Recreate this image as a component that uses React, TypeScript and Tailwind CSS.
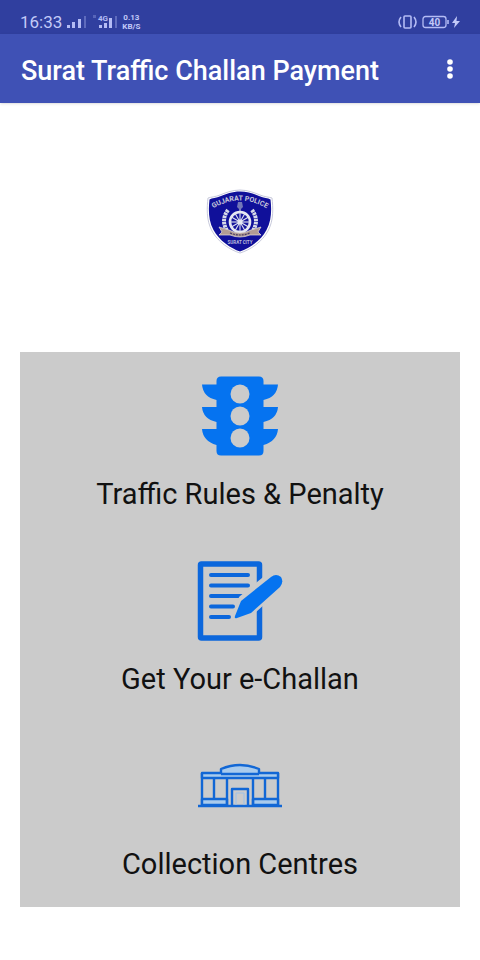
import type { ReactNode } from "react";

const BLUE = "#0573f0";

function Signal() {
  return (
    <svg viewBox="0 0 20 14" className="h-[14px] w-5" fill="#b4bcf5" aria-hidden="true">
      <rect x="0" y="10" width="3" height="3" />
      <rect x="5" y="7" width="3" height="6" />
      <rect x="11" y="4" width="3" height="9" />
      <rect x="17" y="1" width="2" height="12" opacity=".35" />
    </svg>
  );
}

function StatusBar() {
  return (
    <div className="flex h-[34px] items-center justify-between bg-[#303f9f] pt-[10px] pr-[19px] pl-5 text-[#c3caf8]">
      <div className="flex items-center">
        <span className="text-[17px] leading-5">16:33</span>
        <span className="ml-[5px]">
          <Signal />
        </span>
        <svg viewBox="0 0 26 14" className="ml-[6px] h-[14px] w-[26px]" fill="#b4bcf5" aria-hidden="true">
          <rect x="0" y="0" width="3" height="3" opacity=".3" />
          <text x="5" y="6" fontSize="8" fontWeight="700">4G</text>
          <rect x="6" y="10" width="3" height="3" />
          <rect x="11" y="8" width="3" height="5" />
          <rect x="16" y="3" width="3" height="10" />
          <rect x="22" y="1" width="2" height="12" opacity=".35" />
        </svg>
        <span className="ml-[3px] flex flex-col text-center text-[8px] leading-[9px] font-bold">
          <span>0.13</span>
          <span>KB/S</span>
        </span>
      </div>
      <svg viewBox="0 0 64 16" className="h-4 w-16" fill="none" stroke="#b4bcf5" strokeWidth="1.6" aria-hidden="true">
        <rect x="7" y="2" width="7" height="12" rx="1" />
        <path d="M4 3Q0 8 4 13M17 3Q21 8 17 13" />
        <rect x="26" y="2.500" width="23" height="11" rx="2.500" strokeWidth="1.3" />
        <path d="M51 6V10" />
        <text x="37.500" y="11.500" fontSize="10" fontWeight="700" fill="#c3caf8" stroke="none" textAnchor="middle">40</text>
        <path d="M60 2L55 9H58L57 14L63 7H59.500Z" fill="#c3caf8" stroke="none" />
      </svg>
    </div>
  );
}

function PoliceBadge() {
  const spokes = Array.from({ length: 12 }, (_, i) => i * 30);
  return (
    <svg viewBox="0 0 68 66" className="h-[66px] w-[68px]" role="img" aria-label="Gujarat Police, Surat City">
      <path
        d="M34 1C42 1 49 4 54 6C59 8 63 8 66 9C67 18 68 31 62 42C56 53 44 61 34 64C24 61 12 53 6 42C0 31 1 18 2 9C5 8 9 8 14 6C19 4 26 1 34 1Z"
        fill="#fff"
        stroke="#b9bbd2"
        strokeWidth=".8"
      />
      <path
        d="M34 2.500C42 2.500 48 5 53 7C58 9 62 9 64.500 10.500C65.500 19 66 31 60.500 41C55 51.500 43 59.500 34 62.500C25 59.500 13 51.500 7.500 41C2 31 2.500 19 3.500 10.500C6 9 10 9 15 7C20 5 26 2.500 34 2.500Z"
        fill="#10109a"
      />
      <path id="badge-arc" d="M8 19Q34 4 60 19" fill="none" />
      <text fontSize="7" fontWeight="700" fill="#c9c9da">
        <textPath href="#badge-arc" startOffset="50%" textAnchor="middle">GUJARAT POLICE</textPath>
      </text>
      <path d="M32 13H36L37 18L35 20V22H33V20L31 18Z" fill="#7377b8" />
      <path d="M22 21Q14 32 22 43M46 21Q54 32 46 43" fill="none" stroke="#d7dae8" strokeWidth="4" strokeDasharray="2.500 .7" />
      <circle cx="34" cy="33" r="10" fill="#17179c" stroke="#e7e9f2" strokeWidth="2.600" />
      {spokes.map((angle) => (
        <path key={angle} d="M34 23V31" transform={`rotate(${angle} 34 33)`} stroke="#e1e3f0" strokeWidth="1.100" />
      ))}
      <circle cx="34" cy="33" r="2.500" fill="#e7e9f2" />
      <path d="M13 38L23 41Q34 47 45 41L55 38L52 43L55 46L44 46Q34 50 24 46L13 46L16 43Z" fill="#b19c94" stroke="#e5dedb" strokeWidth=".7" />
      <path d="M24 44Q34 48 44 44" fill="none" stroke="#4c3f67" strokeWidth="1.200" strokeDasharray="2 1" />
      <text x="34" y="55" fontSize="4.500" fontWeight="700" fill="#b9bbdb" textAnchor="middle">SURAT CITY</text>
    </svg>
  );
}

function TrafficLightIcon() {
  return (
    <svg viewBox="0 0 88 80" className="h-20 w-[88px]" fill={BLUE} aria-hidden="true">
      <path d="M25 .5H63Q67.500 .5 67.500 5V8.500H82Q81 21 67.500 24V31H82Q81 43 67.500 46V53H82Q81 65 67.500 69V75Q67.500 79.500 63 79.500H25Q20.500 79.500 20.500 75V69Q7 65 6 53H20.500V46Q7 43 6 31H20.500V24Q7 21 6 8.500H20.500V5Q20.500 .5 25 .5Z" />
      <g fill="#cbcbcb">
        <circle cx="44" cy="18" r="9.500" />
        <circle cx="44" cy="40" r="9.500" />
        <circle cx="44" cy="62" r="9.500" />
      </g>
    </svg>
  );
}

function ChallanIcon() {
  return (
    <svg viewBox="0 0 88 80" className="h-20 w-[88px]" fill="none" aria-hidden="true">
      <rect x="4.500" y="3" width="59" height="74" rx="1" stroke="#0c67dc" strokeWidth="5.500" />
      <path d="M15 14H52M15 24.500H52M15 35H48M15 45.500H37M15 56H33" stroke="#0c67dc" strokeWidth="4" strokeLinecap="round" />
      <path d="M46 38L74 15Q79 11 84 15Q88 20 83 26L56 50L40 57Z" fill="#cbcbcb" stroke="#cbcbcb" strokeWidth="7" strokeLinejoin="round" />
      <path d="M45 40L75 16Q80 12 85 16Q88 21 84 26L55 52L41 57Q38 58 39 55Z" fill={BLUE} />
    </svg>
  );
}

function CentreIcon() {
  return (
    <svg viewBox="0 0 88 80" className="h-20 w-[88px]" fill="none" stroke="#1267d5" strokeWidth="2.400" strokeLinejoin="round" aria-hidden="true">
      <path d="M6 27V59M82 27V59M2 60H86" />
      <path d="M6 27H25V23Q44 15 63 23V27H82V32H6Z" fill="#a9cbed" />
      <path d="M25 28H63" />
      <path d="M6 53H31V59H6ZM57 53H82V59H57Z" fill="#a9cbed" />
      <path d="M18 33V53M31 33V59M57 33V59M69 33V53" />
      <path d="M36 59V43H52V59" />
      <path d="M40 59V47H48V59" stroke="#9dc1e8" strokeWidth="1" />
    </svg>
  );
}

function MenuItem({ icon, label }: { icon: ReactNode; label: string }) {
  return (
    <button type="button" className="flex flex-col items-center px-2 pt-6 pb-[25px]">
      {icon}
      <span className="mt-5 text-[29px] leading-9 text-[#111]">{label}</span>
    </button>
  );
}

export default function App() {
  return (
    <div className="min-h-screen bg-white pb-[53px] font-['Roboto','Liberation_Sans',sans-serif]">
      <StatusBar />
      <header className="flex h-[69px] items-center justify-between bg-[#3f51b5] pr-[18px] pl-[21px] shadow-sm">
        <h1 className="pt-1 text-[27px] leading-8 font-medium text-white">Surat Traffic Challan Payment</h1>
        <button type="button" aria-label="More options" className="flex w-6 justify-center">
          <svg viewBox="0 0 6 22" className="h-[22px] w-[6px]" fill="#fff" aria-hidden="true">
            <circle cx="3" cy="4" r="2.800" />
            <circle cx="3" cy="11" r="2.800" />
            <circle cx="3" cy="18" r="2.800" />
          </svg>
        </button>
      </header>
      <main>
        <div className="flex justify-center pt-[86px] pb-[97px]">
          <PoliceBadge />
        </div>
        <nav className="mx-5 grid grid-cols-1 bg-[#cbcbcb]">
          <MenuItem icon={<TrafficLightIcon />} label="Traffic Rules & Penalty" />
          <MenuItem icon={<ChallanIcon />} label="Get Your e-Challan" />
          <MenuItem icon={<CentreIcon />} label="Collection Centres" />
        </nav>
      </main>
    </div>
  );
}
